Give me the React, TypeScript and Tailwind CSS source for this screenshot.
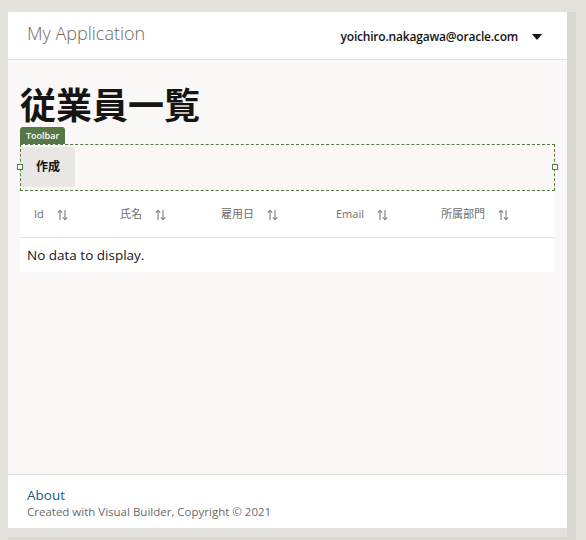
const SortIcon = () => (
  <svg width="11" height="12" viewBox="0 0 11 12" className="text-[#8a8886]" fill="none" stroke="currentColor" strokeWidth="1.2">
    <path d="M3 11V1.5M0.8 3.6L3 1.3L5.2 3.6" />
    <path d="M8 1v9.5M5.8 8.4L8 10.7L10.2 8.4" />
  </svg>
);

const columns = [
  { label: "Id", w: "w-[100px] pl-[14px]" },
  { label: "氏名", w: "w-[101px]" },
  { label: "雇用日", w: "w-[115px]" },
  { label: "Email", w: "w-[105px]" },
  { label: "所属部門", w: "flex-1" },
];

export default function App() {
  return (
    <div
      className="w-[586px] h-[540px] bg-[#e4e2dd] pt-[12px] pl-[8px] overflow-hidden"
      style={{ fontFamily: '"Open Sans", "Noto Sans CJK JP", sans-serif' }}
    >
      <div className="flex">
        <div className="w-[559px] h-[516px] bg-[#f9f8f6] flex flex-col">
          {/* header */}
          <div className="h-[48px] bg-white border-b border-[#e3e1de] flex items-center pl-[19px] pr-[25px] shrink-0">
            <span className="text-[18px] font-light text-[#6c6a67] -mt-[4px]">My Application</span>
            <div className="ml-auto flex items-center gap-[14px] mt-[2px]">
              <span className="text-[12px] font-semibold tracking-[-0.2px] text-[#161513]">yoichiro.nakagawa@oracle.com</span>
              <svg width="10" height="6" viewBox="0 0 10 6">
                <path d="M0 0h10L5 6z" fill="#161513" />
              </svg>
            </div>
          </div>

          {/* main */}
          <div className="flex-1 px-[12px] pt-[26px]">
            <h1 className="text-[36px] leading-[40px] font-bold text-[#161513]">従業員一覧</h1>
            <div className="mt-[1px] w-fit bg-[#587747] text-white text-[9px] leading-[17px] px-[6px] rounded-t-[3px] font-semibold">
              Toolbar
            </div>
            <div className="relative h-[47px] border border-dashed border-[#587747] py-[2px]">
              <button className="h-[40px] w-[54px] bg-[#e8e7e5] rounded-[3px] text-[12px] font-bold text-[#161513]">作成</button>
              <span className="absolute left-[-4px] top-[19px] w-[6px] h-[6px] bg-white border border-[#587747]" />
              <span className="absolute right-[-4px] top-[19px] w-[6px] h-[6px] bg-white border border-[#587747]" />
            </div>
            <div className="bg-white">
              <div className="h-[47px] flex items-center border-b border-[#e5e4e2] pt-[1px]">
                {columns.map((c) => (
                  <div key={c.label} className={`${c.w} flex items-center gap-[13px] text-[11px] text-[#6f6d6a]`}>
                    <span>{c.label}</span>
                    <SortIcon />
                  </div>
                ))}
              </div>
              <div className="h-[34px] flex items-center pl-[7px] text-[13.5px] text-[#161513]">No data to display.</div>
            </div>
          </div>

          {/* footer */}
          <div className="h-[54px] bg-white border-t border-[#e3e1de] pl-[19px] pt-[11px] shrink-0">
            <div className="text-[13.5px] leading-[18px] text-[#1d5a7a]">About</div>
            <div className="text-[11.5px] leading-[16px] text-[#6c6a67]">Created with Visual Builder, Copyright © 2021</div>
          </div>
        </div>
        <div className="w-[9px] h-[525px] bg-[#d9d7d2]" />
      </div>
      <div className="w-[568px] h-[9px] bg-[#d9d7d2]" />
    </div>
  );
}
